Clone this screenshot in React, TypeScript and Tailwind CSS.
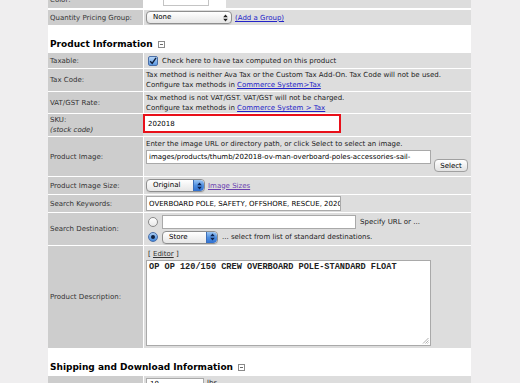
import React from 'react';

const labelCls = 'w-[95px] shrink-0 bg-[#cdcdcd] pl-[2px] flex items-center text-[#333]';
const valueCls = 'flex-1 bg-[#dddddd] pl-[2px] text-[#222]';
const linkCls = 'text-[#2323c8] underline';

const Arrows = ({ blue }: { blue?: boolean }) => (
  <span
    className={
      blue
        ? 'h-full w-[11px] rounded-r-[4px] bg-gradient-to-b from-[#9cc6f2] via-[#4f8fe0] to-[#2f6fd0] flex items-center justify-center border-l border-[#3d6fb8]'
        : 'h-full w-[11px] flex items-center justify-center'
    }
  >
    <svg width="5" height="8" viewBox="0 0 5 8">
      <path d="M2.5 0.5 L4.8 3.2 L0.2 3.2 Z M2.5 7.5 L4.8 4.8 L0.2 4.8 Z" fill={blue ? '#0d2350' : '#222'} />
    </svg>
  </span>
);

const Select = ({ text, w, blue }: { text: string; w: string; blue?: boolean }) => (
  <div
    className={`${w} shrink-0 h-[13px] rounded-[4px] border border-[#8f8f8f] bg-gradient-to-b from-white to-[#e6e6e6] flex items-center justify-between pl-[6px] overflow-hidden shadow-[0_1px_0_rgba(0,0,0,0.08)]`}
  >
    <span className="text-[7px] leading-none text-black">{text}</span>
    <Arrows blue={blue} />
  </div>
);

const Collapse = () => (
  <span className="ml-[5px] inline-flex w-[7px] h-[7px] border border-[#8a8a8a] items-center justify-center">
    <span className="w-[3px] h-[1px] bg-[#6a6a6a]" />
  </span>
);

const Radio = ({ on }: { on?: boolean }) =>
  on ? (
    <span className="w-[10px] h-[10px] shrink-0 rounded-full border border-[#4a6fa8] bg-gradient-to-b from-[#a8cdf4] to-[#3f86dc] flex items-center justify-center">
      <span className="w-[4px] h-[4px] rounded-full bg-[#0f1f3c]" />
    </span>
  ) : (
    <span className="w-[10px] h-[10px] shrink-0 rounded-full border border-[#8a8a8a] bg-gradient-to-b from-white to-[#e8e8e8]" />
  );

export default function App() {
  return (
    <div className="w-[520px] h-[383px] overflow-hidden bg-[#efeeef] flex font-['DejaVu_Sans',sans-serif] text-[7px] leading-[10px]">
      <div className="w-[48px] shrink-0" />
      <div className="w-[423px] shrink-0 bg-white">
        {/* Color (cut off at top) */}
        <div className="flex gap-[1px] h-[16px] -mt-[8px] mb-[2px]">
          <div className={labelCls}>Color:</div>
          <div className="flex-1 bg-[#dddddd] flex">
            <div className="w-[82px] bg-white pl-[19px] pt-[2px]">
              <div className="w-[46px] h-[12px] border border-[#c4c4c4]" />
            </div>
          </div>
        </div>

        {/* Quantity Pricing Group */}
        <div className="flex gap-[1px] h-[15px]">
          <div className={labelCls}>Quantity Pricing Group:</div>
          <div className={`${valueCls} flex items-center gap-[3px]`}>
            <Select text="None" w="w-[86px]" />
            <span className={linkCls}>(Add a Group)</span>
          </div>
        </div>

        <div className="h-[28px] pt-[13px] pl-[2px] flex items-start">
          <span className="text-[9px] leading-[12px] font-bold text-black flex items-center">
            Product Information
            <Collapse />
          </span>
        </div>

        <div className="flex flex-col gap-[1px]">
          {/* Taxable */}
          <div className="flex gap-[1px] h-[15px]">
            <div className={labelCls}>Taxable:</div>
            <div className={`${valueCls} flex items-center gap-[4px] pl-[4px]`}>
              <span className="w-[10px] h-[10px] rounded-[2px] border border-[#4a6fa8] bg-gradient-to-b from-[#b5d5f6] to-[#5b98e2] flex items-center justify-center">
                <svg width="8" height="8" viewBox="0 0 8 8">
                  <path d="M1.2 4.2 L3.2 6.4 L7 0.8" stroke="#0e1c3a" strokeWidth="1.4" fill="none" />
                </svg>
              </span>
              <span>Check here to have tax computed on this product</span>
            </div>
          </div>

          {/* Tax Code */}
          <div className="flex gap-[1px] h-[22px]">
            <div className={labelCls}>Tax Code:</div>
            <div className={`${valueCls} pt-[1px]`}>
              <div>Tax method is neither Ava Tax or the Custom Tax Add-On. Tax Code will not be used.</div>
              <div>
                Configure tax methods in <span className={linkCls}>Commerce System&gt;Tax</span>
              </div>
            </div>
          </div>

          {/* VAT/GST */}
          <div className="flex gap-[1px] h-[21px]">
            <div className={labelCls}>VAT/GST Rate:</div>
            <div className={`${valueCls} pt-[1px]`}>
              <div>Tax method is not VAT/GST. VAT/GST will not be charged.</div>
              <div>
                Configure tax methods in <span className={linkCls}>Commerce System &gt; Tax</span>
              </div>
            </div>
          </div>

          {/* SKU */}
          <div className="flex gap-[1px] h-[22px]">
            <div className={`${labelCls} flex-col items-start justify-center`}>
              <span>SKU:</span>
              <span className="italic">(stock code)</span>
            </div>
            <div className="flex-1 bg-[#dddddd] -ml-[1px]">
              <div className="w-[198px] h-[19px] border-2 border-[#e8101a] bg-white pl-[3px] flex items-center text-[7px] text-black">
                202018
              </div>
            </div>
          </div>

          {/* Product Image */}
          <div className="flex gap-[1px] h-[39px]">
            <div className={labelCls}>Product Image:</div>
            <div className={`${valueCls} pt-[2px]`}>
              <div>Enter the image URL or directory path, or click Select to select an image.</div>
              <div className="flex items-start gap-[3px] mt-[1px]">
                <div className="w-[285px] h-[14px] border border-[#a9a9a9] bg-white pl-[2px] flex items-center overflow-hidden whitespace-nowrap text-black">
                  images/products/thumb/202018-ov-man-overboard-poles-accessories-sail-
                </div>
                <div className="mt-[9px] w-[34px] h-[13px] rounded-[4px] border border-[#a0a0a0] bg-gradient-to-b from-white to-[#e2e2e2] flex items-center justify-center text-black">
                  Select
                </div>
              </div>
            </div>
          </div>

          {/* Product Image Size */}
          <div className="flex gap-[1px] h-[17px]">
            <div className={labelCls}>Product Image Size:</div>
            <div className={`${valueCls} flex items-center gap-[3px]`}>
              <Select text="Original" w="w-[59px]" blue />
              <span className="text-[#6b3fb0] underline">Image Sizes</span>
            </div>
          </div>

          {/* Search Keywords */}
          <div className="flex gap-[1px] h-[17px]">
            <div className={labelCls}>Search Keywords:</div>
            <div className={`${valueCls} flex items-center pl-[1px]`}>
              <div className="w-[195px] h-[15px] border border-[#a9a9a9] bg-white pl-[2px] flex items-center overflow-hidden whitespace-nowrap text-black">
                OVERBOARD POLE, SAFETY, OFFSHORE, RESCUE, 202018
              </div>
            </div>
          </div>

          {/* Search Destination */}
          <div className="flex gap-[1px] h-[32px]">
            <div className={labelCls}>Search Destination:</div>
            <div className={`${valueCls} flex flex-col justify-center gap-[2px] pl-[4px]`}>
              <div className="flex items-center gap-[4px]">
                <Radio />
                <div className="w-[194px] h-[14px] border border-[#a9a9a9] bg-white" />
                <span>Specify URL or ...</span>
              </div>
              <div className="flex items-center gap-[4px]">
                <Radio on />
                <Select text="Store" w="w-[56px]" blue />
                <span>... select from list of standard destinations.</span>
              </div>
            </div>
          </div>

          {/* Product Description */}
          <div className="flex gap-[1px] h-[102px]">
            <div className={labelCls}>Product Description:</div>
            <div className={`${valueCls} pl-[1px] pt-[3px]`}>
              <div className="pl-[2px] leading-[11px]">
                [ <span className="underline text-[#333]">Editor</span> ]
              </div>
              <div className="relative w-[285px] h-[86px] border border-[#a9a9a9] bg-white px-[2px] pt-[1px] font-['Liberation_Mono',monospace] text-[8.6px] leading-[10px] font-bold text-[#222]">
                OP OP 120/150 CREW OVERBOARD POLE-STANDARD FLOAT
                <svg className="absolute right-[1px] bottom-[1px]" width="7" height="7" viewBox="0 0 7 7">
                  <path d="M6.5 1 L1 6.5 M6.5 3.5 L3.5 6.5 M6.5 5.5 L5.5 6.5" stroke="#9a9a9a" strokeWidth="0.8" />
                </svg>
              </div>
            </div>
          </div>
        </div>

        <div className="h-[28px] pt-[13px] pl-[2px] flex items-start">
          <span className="text-[9px] leading-[12px] font-bold text-black flex items-center">
            Shipping and Download Information
            <Collapse />
          </span>
        </div>

        {/* Weight */}
        <div className="flex gap-[1px] h-[16px]">
          <div className={`${labelCls} items-end`}>Weight:</div>
          <div className={`${valueCls} pt-[2px] pl-[1px] flex items-start gap-[3px]`}>
            <div className="w-[58px] h-[14px] border border-[#a9a9a9] bg-white pl-[3px] text-black">10</div>
            <span>lbs</span>
          </div>
        </div>
      </div>
      <div className="flex-1" />
    </div>
  );
}
